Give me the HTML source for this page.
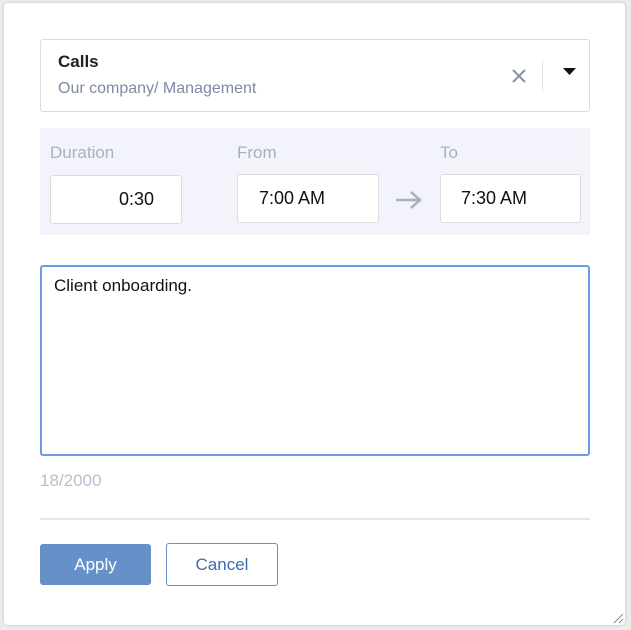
<!DOCTYPE html><html><head><style>
*{box-sizing:border-box;margin:0;padding:0}
body{width:631px;height:630px;background:#ececec;font-family:"Liberation Sans",sans-serif;position:relative;overflow:hidden}
.dlg{position:absolute;left:4px;top:3px;width:621px;height:622px;background:#fff;border-radius:4px;box-shadow:0 0 3px rgba(0,0,0,.2)}
.a{position:absolute}
.sel{left:40px;top:39px;width:550px;height:73px;border:1px solid #dcdcdc;border-radius:3px}
.lbl{color:#a9b0c0;font-size:17px}
.inp{background:#fff;border:1px solid #dcdcdc;border-radius:3px;height:49px;font-size:18px;color:#111;line-height:47px}
</style></head><body>
<div class="dlg"></div>
<div class="a sel"></div>
<div class="a" style="left:58px;top:52px;font-size:17px;font-weight:bold;color:#222">Calls</div>
<div class="a" style="left:58px;top:80px;font-size:16px;color:#7d8aa3">Our company/ Management</div>
<svg class="a" style="left:511px;top:68px" width="16" height="16"><path d="M2 2L14 14M14 2L2 14" stroke="#8a93a5" stroke-width="2"/></svg>
<div class="a" style="left:542px;top:61px;width:1px;height:30px;background:#ddd"></div>
<svg class="a" style="left:563px;top:68px" width="13" height="8"><path d="M0 0H13L6.5 7Z" fill="#111"/></svg>
<div class="a" style="left:40px;top:128px;width:550px;height:107px;background:#f2f3fb"></div>
<div class="a lbl" style="left:50px;top:143px">Duration</div>
<div class="a lbl" style="left:237px;top:143px">From</div>
<div class="a lbl" style="left:440px;top:143px">To</div>
<div class="a inp" style="left:50px;top:175px;width:132px;padding-left:68px">0:30</div>
<div class="a inp" style="left:237px;top:174px;width:142px;padding-left:21px">7:00 AM</div>
<svg class="a" style="left:395px;top:190px" width="28" height="20"><path d="M1 10H25M16 2L25 10L16 18" stroke="#a7b0c2" stroke-width="2.5" fill="none"/></svg>
<div class="a inp" style="left:440px;top:174px;width:141px;padding-left:20px">7:30 AM</div>
<div class="a" style="left:40px;top:265px;width:550px;height:191px;border:2px solid #6a9be0;border-radius:3px"></div>
<div class="a" style="left:54px;top:276px;font-size:17px;color:#111">Client onboarding.</div>
<div class="a" style="left:40px;top:471px;font-size:17px;color:#b8bfcc">18/2000</div>
<div class="a" style="left:40px;top:518px;width:550px;height:2px;background:#e6e6e6"></div>
<div class="a" style="left:40px;top:544px;width:111px;height:41px;background:#6690c8;border-radius:3px;color:#fff;font-size:17px;text-align:center;line-height:41px">Apply</div>
<div class="a" style="left:166px;top:543px;width:112px;height:43px;border:1px solid #6690c8;border-radius:3px;color:#3d6cb0;font-size:17px;text-align:center;line-height:41px">Cancel</div>
<svg class="a" style="left:612px;top:612px" width="12" height="12"><path d="M11 2L2 11M11 7L7 11" stroke="#888" stroke-width="1"/></svg>
</body></html>
